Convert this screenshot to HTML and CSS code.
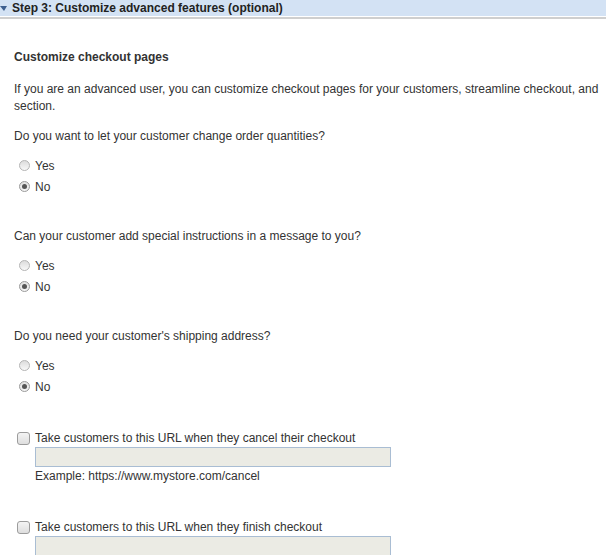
FILE: index.html
```html
<!DOCTYPE html>
<html>
<head>
<meta charset="utf-8">
<link rel="stylesheet" href="styles.css">
</head>
<body>
<div class="step-head">
  <span class="tri"></span>
  <span class="step-title">Step 3: Customize advanced features (optional)</span>
</div>
<div class="content">
  <h3 class="sub">Customize checkout pages</h3>
  <p class="intro">If you are an advanced user, you can customize checkout pages for your customers, streamline checkout, and<br>section.</p>

  <div class="q">
    <p class="qtext">Do you want to let your customer change order quantities?</p>
    <label class="opt"><span class="radio"></span>Yes</label>
    <label class="opt"><span class="radio on"></span>No</label>
  </div>

  <div class="q">
    <p class="qtext">Can your customer add special instructions in a message to you?</p>
    <label class="opt"><span class="radio"></span>Yes</label>
    <label class="opt"><span class="radio on"></span>No</label>
  </div>

  <div class="q">
    <p class="qtext">Do you need your customer's shipping address?</p>
    <label class="opt"><span class="radio"></span>Yes</label>
    <label class="opt"><span class="radio on"></span>No</label>
  </div>

  <div class="url">
    <label class="chk-row"><span class="chk"></span>Take customers to this URL when they cancel their checkout</label>
    <div class="field"></div>
    <div class="example">Example: https://www.mystore.com/cancel</div>
  </div>

  <div class="url">
    <label class="chk-row"><span class="chk"></span>Take customers to this URL when they finish checkout</label>
    <div class="field"></div>
  </div>
</div>
</body>
</html>
```
FILE: styles.css
```css
html, body {
  margin: 0;
  padding: 0;
  background: #fff;
  overflow: hidden;
}
body {
  font-family: "Liberation Sans", Arial, sans-serif;
  font-size: 12px;
  color: #333;
  width: 606px;
  height: 555px;
}
.step-head {
  height: 16px;
  background: #d3e2f4;
  display: flex;
  align-items: center;
  border-bottom: 1px solid #fff;
  box-shadow: 0 2px 0 #cfcfcf;
  margin-bottom: 2px;
}
.tri {
  width: 0;
  height: 0;
  border-left: 4px solid transparent;
  border-right: 3px solid transparent;
  border-top: 5px solid #3d5f8f;
  margin-right: 5px;
}
.step-title {
  font-weight: bold;
  line-height: 14px;
  color: #222;
}
.content {
  padding: 0 0 0 14px;
  white-space: nowrap;
}
.sub {
  font-size: 12px;
  font-weight: bold;
  margin: 32px 0 0;
  line-height: 16px;
}
.intro {
  margin: 16px 0 0;
  line-height: 17px;
}
.q {
  margin-top: 14px;
  margin-bottom: 32px;
}
.qtext {
  margin: 0 0 12px;
  line-height: 14px;
}
.opt {
  display: flex;
  align-items: center;
  height: 21px;
  padding-left: 5px;
}
.radio {
  width: 11px;
  height: 11px;
  border-radius: 50%;
  border: 1px solid #b4b4b4;
  background: linear-gradient(#dcdcdc, #f8f8f8);
  box-sizing: border-box;
  margin-right: 5px;
  position: relative;
}
.radio.on {
  background: linear-gradient(#e0e0e0, #f4f4f4);
  border-color: #9a9a9a;
}
.radio.on::after {
  content: "";
  position: absolute;
  left: 2px;
  top: 2px;
  width: 5px;
  height: 5px;
  border-radius: 50%;
  background: #555;
}
.url {
  margin-top: 34px;
}
.chk-row {
  display: flex;
  align-items: center;
  height: 14px;
  padding-left: 3px;
}
.chk {
  width: 13px;
  height: 13px;
  border: 1px solid #9c9c9c;
  border-radius: 3px;
  box-sizing: border-box;
  background: linear-gradient(#f4f4f4, #dedede);
  margin-right: 5px;
}
.field {
  margin: 2px 0 0 21px;
  width: 356px;
  height: 20px;
  box-sizing: border-box;
  border: 1px solid #a9bdd3;
  background: #ebebe4;
}
.example {
  margin: 2px 0 37px 21px;
  line-height: 14px;
}
.example + .url, .url + .url {
  margin-top: 0;
}
```
